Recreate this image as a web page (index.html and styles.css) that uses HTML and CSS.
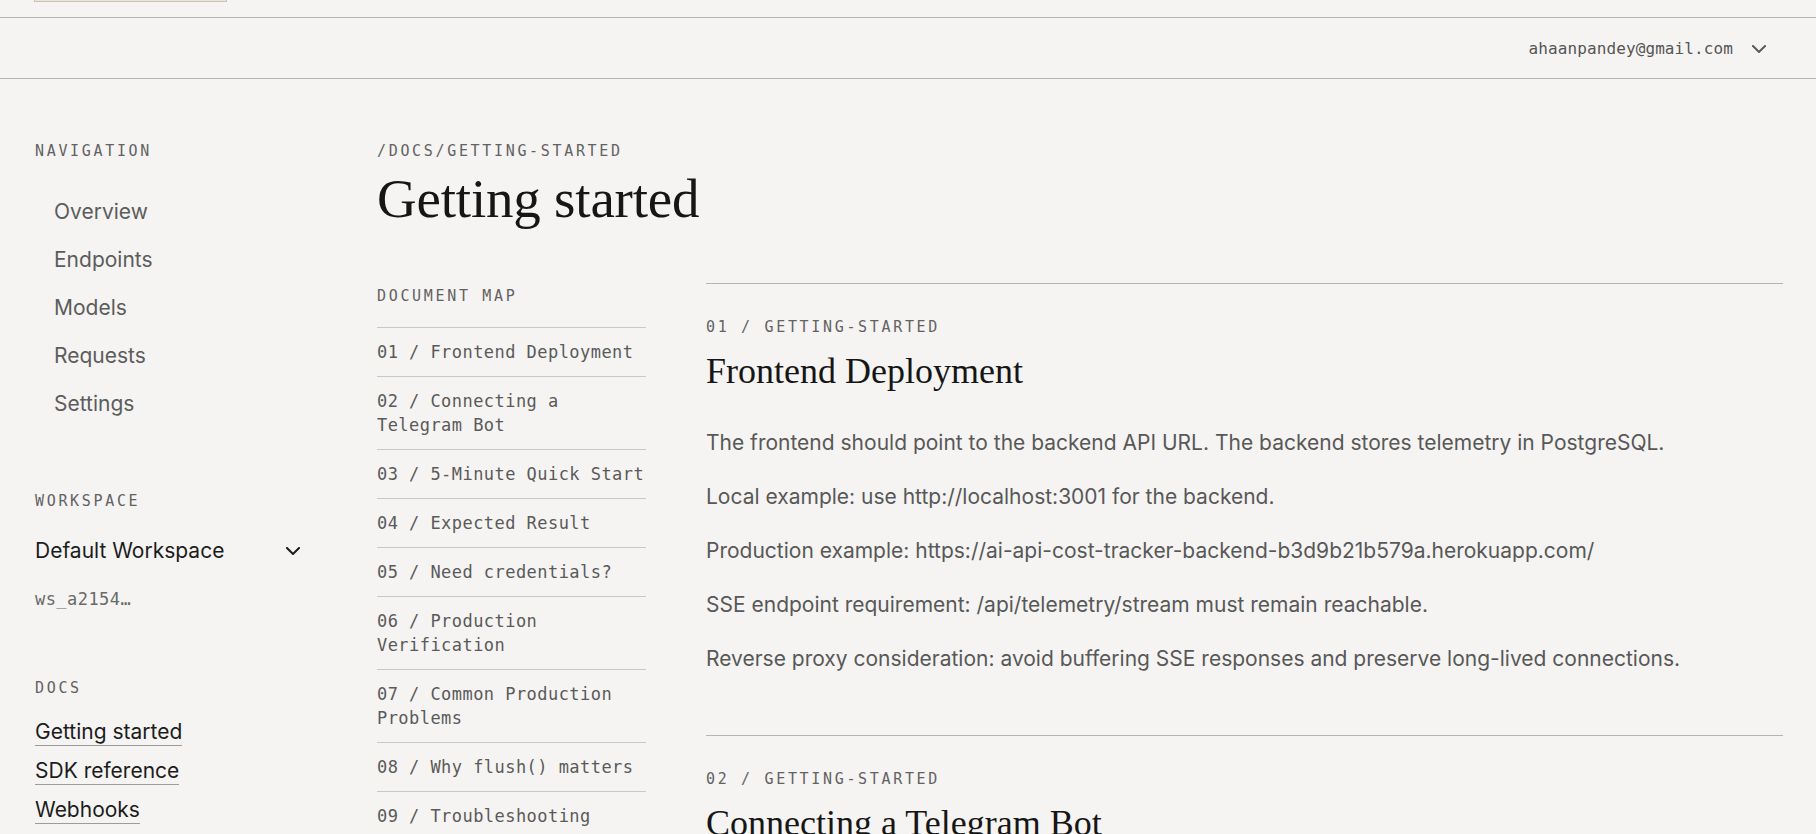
FILE: index.html
```html
<!DOCTYPE html>
<html lang="en">
<head>
<meta charset="utf-8">
<title>Getting started — Docs</title>
<link rel="stylesheet" href="styles.css">
</head>
<body>
<div class="top-strip"><div class="top-strip__tab"></div></div>

<header class="topbar">
  <button class="account" type="button">
    <span class="account__email">ahaanpandey@gmail.com</span>
    <svg class="chevron chevron--muted" width="14" height="8" viewBox="0 0 14 8" aria-hidden="true"><polyline points="1,1 7,7 13,1"/></svg>
  </button>
</header>

<div class="layout">
  <aside class="sidebar">
    <section class="side-group">
      <h2 class="eyebrow">Navigation</h2>
      <nav class="side-nav">
        <a class="side-nav__item" href="#">Overview</a>
        <a class="side-nav__item" href="#">Endpoints</a>
        <a class="side-nav__item" href="#">Models</a>
        <a class="side-nav__item" href="#">Requests</a>
        <a class="side-nav__item" href="#">Settings</a>
      </nav>
    </section>

    <section class="side-group side-group--workspace">
      <h2 class="eyebrow">Workspace</h2>
      <div class="workspace-select">
        <span>Default Workspace</span>
        <svg class="chevron" width="14" height="8" viewBox="0 0 14 8" aria-hidden="true"><polyline points="1,1 7,7 13,1"/></svg>
      </div>
      <div class="workspace-id">ws_a2154…</div>
    </section>

    <section class="side-group side-group--docs">
      <h2 class="eyebrow">Docs</h2>
      <div class="doc-links">
        <a class="doc-link" href="#">Getting started</a>
        <a class="doc-link" href="#">SDK reference</a>
        <a class="doc-link" href="#">Webhooks</a>
      </div>
    </section>
  </aside>

  <main class="main">
    <div class="eyebrow eyebrow--path">/docs/getting-started</div>
    <h1 class="page-title">Getting started</h1>

    <div class="doc-grid">
      <aside class="doc-map">
        <h2 class="eyebrow eyebrow--map">Document map</h2>
        <ol class="doc-map__list">
          <li><a href="#">01 / Frontend Deployment</a></li>
          <li><a href="#">02 / Connecting a Telegram Bot</a></li>
          <li><a href="#">03 / 5-Minute Quick Start</a></li>
          <li><a href="#">04 / Expected Result</a></li>
          <li><a href="#">05 / Need credentials?</a></li>
          <li><a href="#">06 / Production Verification</a></li>
          <li><a href="#">07 / Common Production Problems</a></li>
          <li><a href="#">08 / Why flush() matters</a></li>
          <li><a href="#">09 / Troubleshooting</a></li>
        </ol>
      </aside>

      <div class="doc-sections">
        <article class="doc-section">
          <div class="eyebrow">01 / getting-started</div>
          <h2 class="doc-section__title">Frontend Deployment</h2>
          <p>The frontend should point to the backend API URL. The backend stores telemetry in PostgreSQL.</p>
          <p>Local example: use http://localhost:3001 for the backend.</p>
          <p>Production example: https://ai-api-cost-tracker-backend-b3d9b21b579a.herokuapp.com/</p>
          <p>SSE endpoint requirement: /api/telemetry/stream must remain reachable.</p>
          <p>Reverse proxy consideration: avoid buffering SSE responses and preserve long-lived connections.</p>
        </article>

        <article class="doc-section">
          <div class="eyebrow">02 / getting-started</div>
          <h2 class="doc-section__title">Connecting a Telegram Bot</h2>
          <p>Create a bot with BotFather and copy its token into the workspace settings.</p>
        </article>
      </div>
    </div>
  </main>
</div>
</body>
</html>
```

FILE: styles.css
```css
* {
  box-sizing: border-box;
}

html,
body {
  margin: 0;
  padding: 0;
  background: #f5f4f2;
  color: #1c1c1c;
  font-family: "Inter", "Noto Sans", sans-serif;
}

a {
  color: inherit;
  text-decoration: none;
}

h1,
h2,
p,
ol {
  margin: 0;
  padding: 0;
}

/* thin strip above the top bar with the edge of a tab */
.top-strip {
  height: 17px;
  padding-left: 34px;
}

.top-strip__tab {
  width: 193px;
  height: 2px;
  background: #ebe4d7;
  border: 1px solid #c9c4ba;
  border-top: none;
}

/* top bar */
.topbar {
  height: 62px;
  border-top: 1px solid #b4b4b2;
  border-bottom: 1px solid #b4b4b2;
  display: flex;
  align-items: center;
  justify-content: flex-end;
  padding-right: 50px;
}

.account {
  display: flex;
  align-items: center;
  gap: 19px;
  border: none;
  background: none;
  padding: 0;
  cursor: pointer;
  margin-top: 1px;
}

.account__email {
  font-family: "DejaVu Sans Mono", "Liberation Mono", monospace;
  font-size: 16px;
  letter-spacing: 0.1px;
  color: #555555;
}

.chevron {
  display: block;
  fill: none;
  stroke: #1c1c1c;
  stroke-width: 2;
  stroke-linecap: square;
}

.chevron--muted {
  stroke: #5a5a5a;
}

/* uppercase tracked labels */
.eyebrow {
  font-family: "DejaVu Sans Mono", "Liberation Mono", monospace;
  font-size: 15px;
  font-weight: 400;
  line-height: 20px;
  letter-spacing: 2.67px;
  text-transform: uppercase;
  color: #626262;
}

/* page layout */
.layout {
  display: flex;
  align-items: flex-start;
}

.sidebar {
  flex: 0 0 377px;
  padding: 62px 0 0 35px;
}

.side-nav {
  display: flex;
  flex-direction: column;
  margin-top: 27px;
}

.side-nav__item {
  padding: 10px 0 10px 19px;
  font-size: 21px;
  line-height: 28px;
  color: #5c5c5c;
}

.side-group--workspace {
  margin-top: 63px;
}

.workspace-select {
  width: 265px;
  margin-top: 26px;
  display: flex;
  align-items: center;
  justify-content: space-between;
  font-size: 21px;
  line-height: 28px;
  color: #1c1c1c;
}

.workspace-id {
  margin-top: 22px;
  font-family: "DejaVu Sans Mono", "Liberation Mono", monospace;
  font-size: 17px;
  letter-spacing: 0.45px;
  line-height: 24px;
  color: #6a6a6a;
}

.side-group--docs {
  margin-top: 67px;
}

.doc-links {
  display: flex;
  flex-direction: column;
  align-items: flex-start;
  gap: 11px;
  margin-top: 20px;
}

.doc-link {
  font-size: 21px;
  line-height: 27px;
  color: #1c1c1c;
  border-bottom: 1px solid #9c9c9c;
}

/* main column */
.main {
  flex: 1;
  min-width: 0;
  padding: 62px 33px 0 0;
}

.page-title {
  margin-top: 8px;
  font-family: "Liberation Serif", "Times New Roman", serif;
  font-size: 55px;
  font-weight: 400;
  line-height: 60px;
  letter-spacing: -0.2px;
  color: #161616;
}

.doc-grid {
  display: grid;
  grid-template-columns: 269px 1fr;
  column-gap: 60px;
  margin-top: 54px;
}

/* document map */
.eyebrow--map {
  line-height: 26px;
  margin-bottom: 18px;
}

.doc-map__list {
  list-style: none;
}

.doc-map__list li {
  border-top: 1px solid #c8c8c6;
  padding: 12px 0;
  font-family: "DejaVu Sans Mono", "Liberation Mono", monospace;
  font-size: 17px;
  letter-spacing: 0.45px;
  line-height: 24px;
  color: #5a5a5a;
}

/* content sections */
.doc-section {
  border-top: 1px solid #b4b4b2;
  padding: 33px 0 60px;
}

.doc-section__title {
  margin-top: 12px;
  font-family: "Liberation Serif", "Times New Roman", serif;
  font-size: 36px;
  font-weight: 400;
  line-height: 44px;
  color: #161616;
}

.doc-section__title + p {
  margin-top: 34px;
}

.doc-section p {
  font-size: 21px;
  line-height: 32px;
  color: #585858;
}

.doc-section p + p {
  margin-top: 22px;
}
```
